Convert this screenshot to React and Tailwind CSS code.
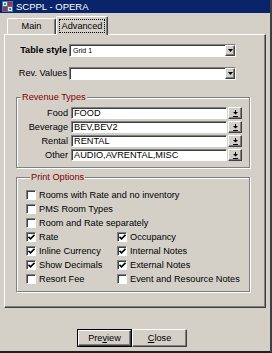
const raised =
  'border border-t-white border-l-white border-r-[#404040] border-b-[#404040] shadow-[inset_-1px_-1px_0_#808080]';
const sunken =
  'border border-t-[#808080] border-l-[#808080] border-r-white border-b-white shadow-[inset_1px_1px_0_#404040]';

function TitleBar() {
  return (
    <div className="flex h-[13px] items-center gap-[3px] bg-[#0a246a] pl-[2px] text-[9.5px] text-white">
      <svg width="11" height="11" viewBox="0 0 11 11">
        <rect x="0" y="0" width="11" height="11" fill="#3a7bbf" />
        <rect x="1" y="1" width="4" height="4" fill="#e8e8e8" />
        <rect x="6" y="1" width="4" height="4" fill="#c0282d" />
        <rect x="1" y="6" width="4" height="4" fill="#c0282d" />
        <rect x="6" y="6" width="4" height="4" fill="#e8e8e8" />
        <rect x="2" y="2" width="2" height="2" fill="#2a9c8c" />
        <rect x="7" y="7" width="2" height="2" fill="#2a9c8c" />
      </svg>
      <span>SCPPL - OPERA</span>
    </div>
  );
}

function Tab({ label, active, className }) {
  return (
    <div
      className={`flex items-center justify-center rounded-t-[2px] border-t border-l border-r border-t-white border-l-white border-r-[#404040] bg-[#d4d0c8] shadow-[inset_-1px_0_0_#808080] ${
        active ? 'relative z-10 -mb-px' : ''
      } ${className}`}
    >
      {active ? (
        <span className="border border-dotted border-black px-[2px] leading-[12px]">{label}</span>
      ) : (
        <span>{label}</span>
      )}
    </div>
  );
}

function Select({ value }) {
  return (
    <div className={`flex h-[13px] w-[167px] bg-white ${sunken}`}>
      <span className="flex-1 pl-[3px] text-[7px] leading-[11px]">{value}</span>
      <span className={`flex w-[10px] items-center justify-center bg-[#d4d0c8] ${raised}`}>
        <svg width="5" height="3" viewBox="0 0 5 3">
          <path d="M0 0h5L2.5 3z" fill="#000" />
        </svg>
      </span>
    </div>
  );
}

function RevenueRow({ label, value }) {
  return (
    <div className="flex h-[12px] items-center">
      <span className="w-[51px] text-right">{label}</span>
      <div className={`ml-[3px] h-[12px] w-[156px] bg-white pl-[2px] leading-[10px] ${sunken}`}>{value}</div>
      <div className={`ml-[1px] flex h-[12px] w-[14px] items-center justify-center bg-[#d4d0c8] ${raised}`}>
        <svg width="5" height="7" viewBox="0 0 5 7">
          <path d="M2 0h1v2h2L2.5 4.5 0 2h2z" fill="#000" />
          <rect x="0" y="6" width="5" height="1" fill="#000" />
        </svg>
      </div>
    </div>
  );
}

function Check({ label, checked }) {
  return (
    <div className="flex h-[14px] items-center gap-[3px]">
      <span className={`flex h-[10px] w-[10px] items-center justify-center bg-white ${sunken}`}>
        {checked ? (
          <svg width="7" height="7" viewBox="0 0 7 7">
            <path d="M0.5 2.8L2.5 4.8L6.5 0.8" stroke="#000" strokeWidth="1.6" fill="none" />
          </svg>
        ) : null}
      </span>
      <span>{label}</span>
    </div>
  );
}

function Group({ title, className, children }) {
  return (
    <fieldset
      className={`ml-[11px] w-[234px] border border-[#808080] shadow-[inset_1px_1px_0_#fff,1px_1px_0_#fff] ${className}`}
    >
      <legend className="ml-[4px] bg-[#d4d0c8] px-[1px] text-[#800000]">{title}</legend>
      {children}
    </fieldset>
  );
}

export default function App() {
  return (
    <div className="flex h-[353px] w-[272px] flex-col overflow-hidden border-r-2 border-b-2 border-r-[#404040] border-b-[#202020] bg-[#d4d0c8] font-['Liberation_Sans',Arial,sans-serif] text-[9.2px] leading-[11px] text-black">
      <TitleBar />
      <div className="flex flex-1 flex-col px-[4px]">
        <div className="flex h-[21px] items-end pl-[3px]">
          <Tab label="Main" className="h-[16px] w-[49px]" />
          <Tab label="Advanced" active className="h-[19px] w-[52px]" />
        </div>

        <section className="h-[274px] border border-t-white border-l-white border-r-[#404040] border-b-[#404040] shadow-[inset_-1px_-1px_0_#808080]">
          <div className="mt-[9px] flex h-[13px] items-center">
            <span className="w-[62px] text-right font-bold">Table style</span>
            <div className="ml-[2px]">
              <Select value="Grid 1" />
            </div>
          </div>
          <div className="mt-[10px] flex h-[13px] items-center">
            <span className="w-[62px] text-right">Rev. Values</span>
            <div className="ml-[2px]">
              <Select value="" />
            </div>
          </div>

          <Group title="Revenue Types" className="mt-[12px] pt-[4px] pb-[6px]">
            <div className="flex flex-col gap-[2px]">
              <RevenueRow label="Food" value="FOOD" />
              <RevenueRow label="Beverage" value="BEV,BEV2" />
              <RevenueRow label="Rental" value="RENTAL" />
              <RevenueRow label="Other" value="AUDIO,AVRENTAL,MISC" />
            </div>
          </Group>

          <Group title="Print Options" className="mt-[4px] pt-[5px] pb-[5px] pl-[9px]">
            <Check label="Rooms with Rate and no inventory" />
            <Check label="PMS Room Types" />
            <Check label="Room and Rate separately" />
            <div className="grid grid-cols-[91px_1fr]">
              <Check label="Rate" checked />
              <Check label="Occupancy" checked />
              <Check label="Inline Currency" checked />
              <Check label="Internal Notes" checked />
              <Check label="Show Decimals" checked />
              <Check label="External Notes" checked />
              <Check label="Resort Fee" />
              <Check label="Event and Resource Notes" />
            </div>
          </Group>
        </section>

        <div className="flex pt-[21px] pl-[73px]">
          <button className="h-[18px] w-[55px] border border-black bg-[#d4d0c8]">
            <span className={`flex h-full w-full items-center justify-center ${raised}`}>
              Pre<u>v</u>iew
            </span>
          </button>
          <button className={`h-[18px] w-[55px] bg-[#d4d0c8] ${raised}`}>
            <u>C</u>lose
          </button>
        </div>
      </div>
    </div>
  );
}
